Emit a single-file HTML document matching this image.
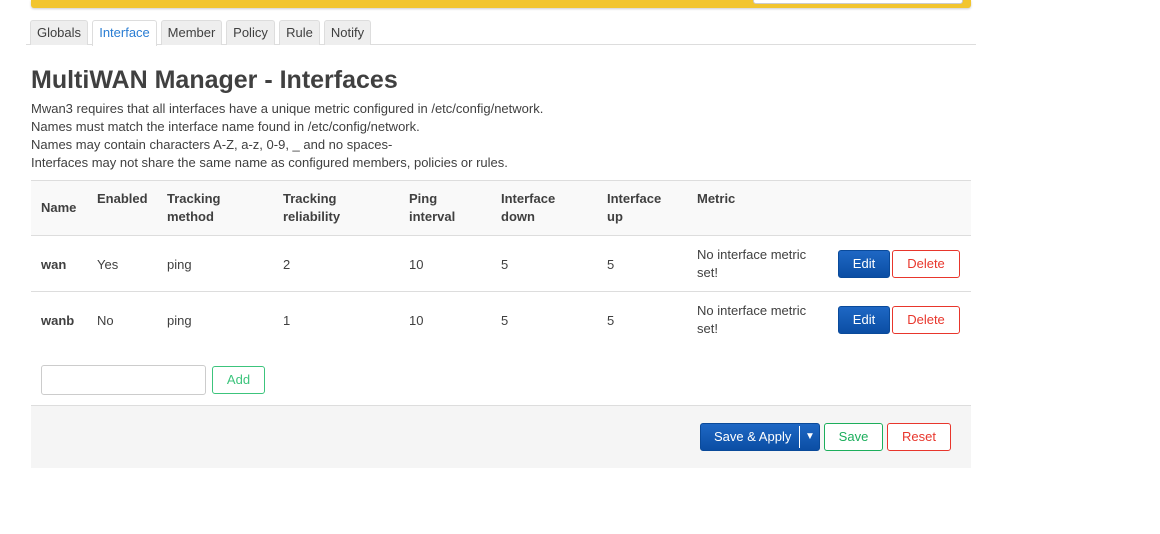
<!DOCTYPE html>
<html><head><style>
*{box-sizing:border-box;margin:0;padding:0}
body{width:1160px;height:534px;background:#fff;font-family:"Liberation Sans",sans-serif;font-size:13px;color:#404040;position:relative;overflow:hidden}
.a{position:absolute;white-space:nowrap}
.tab{position:absolute;top:20px;height:25px;border:1px solid #ddd;border-bottom:none;background:#eee;border-radius:3px 3px 0 0;font-size:13px;line-height:24px;text-align:center;color:#404040}
.th{font-weight:bold;line-height:18px}
.btn{position:absolute;height:28px;border-radius:3px;font-size:13px;line-height:26px;text-align:center}
.edit{background:linear-gradient(#1e67c4,#0b4ea4);color:#fff;border:1px solid #0a4a9a}
.del{border:1px solid #e8362c;color:#e8362c;background:#fff}
</style></head><body>
<div class="a" style="left:31px;top:0;width:940px;height:8px;background:#f2c52e;border-radius:0 0 3px 3px;box-shadow:0 1px 2px #ccc"></div>
<div class="a" style="left:753px;top:-2px;width:210px;height:6px;background:#fff;border:1px solid #ccc;border-radius:3px"></div>
<div class="a" style="left:26px;top:44px;width:950px;height:1px;background:#ddd"></div>
<div class="tab" style="left:30px;width:58px">Globals</div>
<div class="tab" style="left:92px;width:65px;background:#fff;color:#2a7dd3;height:26px">Interface</div>
<div class="tab" style="left:161px;width:61px">Member</div>
<div class="tab" style="left:226px;width:49px">Policy</div>
<div class="tab" style="left:279px;width:41px">Rule</div>
<div class="tab" style="left:324px;width:47px">Notify</div>
<div class="a" style="left:31px;top:66px;font-size:25px;font-weight:bold;color:#404040">MultiWAN Manager - Interfaces</div>
<div class="a" style="left:31px;top:100px;line-height:18px;font-size:13px">Mwan3 requires that all interfaces have a unique metric configured in /etc/config/network.<br>Names must match the interface name found in /etc/config/network.<br>Names may contain characters A-Z, a-z, 0-9, _ and no spaces-<br>Interfaces may not share the same name as configured members, policies or rules.</div>
<div class="a" style="left:31px;top:180px;width:940px;height:56px;background:#f9f9f9;border-top:1px solid #ddd;border-bottom:1px solid #ddd"></div>
<div class="a th" style="left:41px;top:199px">Name</div>
<div class="a th" style="left:97px;top:190px">Enabled</div>
<div class="a th" style="left:167px;top:190px">Tracking<br>method</div>
<div class="a th" style="left:283px;top:190px">Tracking<br>reliability</div>
<div class="a th" style="left:409px;top:190px">Ping<br>interval</div>
<div class="a th" style="left:501px;top:190px">Interface<br>down</div>
<div class="a th" style="left:607px;top:190px">Interface<br>up</div>
<div class="a th" style="left:697px;top:190px">Metric</div>
<div class="a" style="left:31px;top:291px;width:940px;height:1px;background:#ddd"></div>
<div class="a" style="left:41px;top:257px;font-weight:bold">wan</div>
<div class="a" style="left:97px;top:257px">Yes</div><div class="a" style="left:167px;top:257px">ping</div><div class="a" style="left:283px;top:257px">2</div><div class="a" style="left:409px;top:257px">10</div><div class="a" style="left:501px;top:257px">5</div><div class="a" style="left:607px;top:257px">5</div>
<div class="a" style="left:697px;top:246px;line-height:18px">No interface metric<br>set!</div>
<div class="btn edit" style="left:838px;top:250px;width:52px">Edit</div>
<div class="btn del" style="left:892px;top:250px;width:68px">Delete</div>
<div class="a" style="left:41px;top:313px;font-weight:bold">wanb</div>
<div class="a" style="left:97px;top:313px">No</div><div class="a" style="left:167px;top:313px">ping</div><div class="a" style="left:283px;top:313px">1</div><div class="a" style="left:409px;top:313px">10</div><div class="a" style="left:501px;top:313px">5</div><div class="a" style="left:607px;top:313px">5</div>
<div class="a" style="left:697px;top:302px;line-height:18px">No interface metric<br>set!</div>
<div class="btn edit" style="left:838px;top:306px;width:52px">Edit</div>
<div class="btn del" style="left:892px;top:306px;width:68px">Delete</div>
<div class="a" style="left:41px;top:365px;width:165px;height:30px;border:1px solid #ccc;border-radius:3px"></div>
<div class="btn" style="left:212px;top:366px;width:53px;border:1px solid #3cc47c;color:#3cc47c">Add</div>
<div class="a" style="left:31px;top:405px;width:940px;height:63px;background:#f5f5f5;border-top:1px solid #ddd"></div>
<div class="btn edit" style="left:700px;top:423px;width:120px;text-align:left;padding-left:13px">Save &amp; Apply<span style="position:absolute;left:98px;top:2px;width:1px;height:22px;background:#fff"></span><span style="position:absolute;left:104px;font-size:10px">▼</span></div>
<div class="btn" style="left:824px;top:423px;width:59px;border:1px solid #1cae5c;color:#1cae5c;background:#fff">Save</div>
<div class="btn del" style="left:887px;top:423px;width:64px">Reset</div>
</body></html>
